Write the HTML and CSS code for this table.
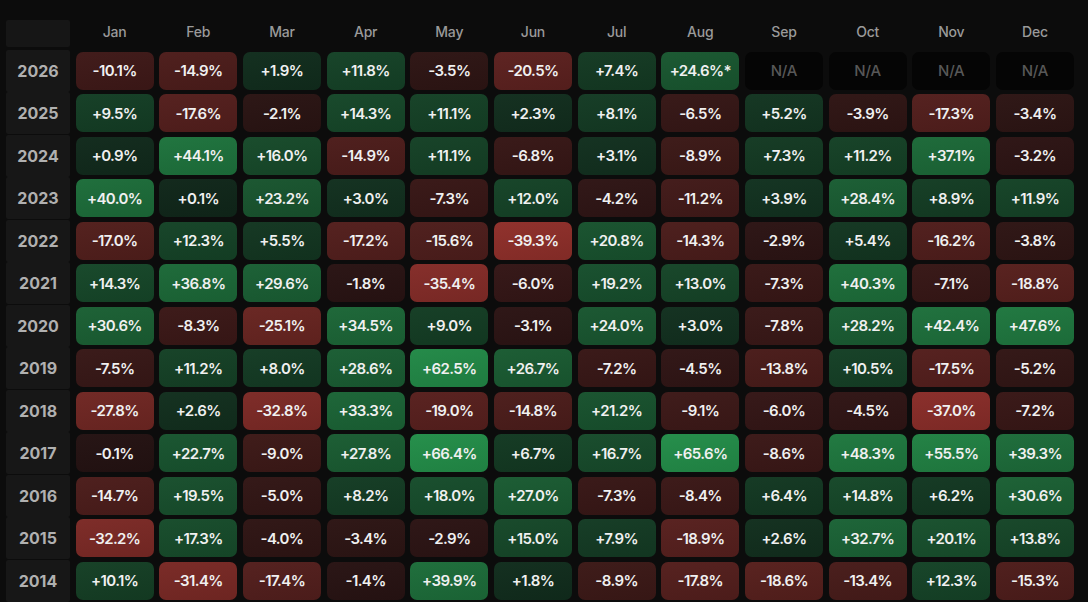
FILE: index.html
```html
<!DOCTYPE html>
<html lang="en">
<head>
<meta charset="utf-8">
<title>Monthly Returns</title>
<link rel="stylesheet" href="styles.css">
</head>
<body>
<div class="heatmap" id="heatmap">
  <div class="corner"></div>
  <div class="month">Jan</div><div class="month">Feb</div><div class="month">Mar</div>
  <div class="month">Apr</div><div class="month">May</div><div class="month">Jun</div>
  <div class="month">Jul</div><div class="month">Aug</div><div class="month">Sep</div>
  <div class="month">Oct</div><div class="month">Nov</div><div class="month">Dec</div>
</div>
<script src="script.js"></script>
</body>
</html>
```
FILE: styles.css
```css
html, body {
  margin: 0;
  padding: 0;
  background: #0c0c0c;
}
body {
  font-family: Inter, "Noto Sans", "Liberation Sans", sans-serif;
  width: 1088px;
  height: 602px;
  overflow: hidden;
}
.heatmap {
  display: grid;
  width: 1068px;
  margin: 0 0 0 6px;
  padding-top: 20px;
  grid-template-columns: 64px repeat(12, 1fr);
  grid-template-rows: 27px repeat(13, 38px);
  column-gap: 5.6px;
  row-gap: 4.5px;
}
.corner {
  background: #161616;
  border-radius: 2px;
}
.month {
  display: flex;
  align-items: flex-start;
  justify-content: center;
  padding-top: 3px;
  color: #9a9a9a;
  font-size: 14px;
  font-weight: 500;
  letter-spacing: -0.2px;
}
.year {
  display: flex;
  align-items: center;
  justify-content: center;
  background: #171717;
  color: #b0b0b0;
  font-size: 16px;
  font-weight: 700;
  border-radius: 2px;
  margin: -2px 0;
}
.cell {
  display: flex;
  align-items: center;
  justify-content: center;
  border-radius: 7px;
  color: #f0f0f0;
  font-size: 15px;
  font-weight: 600;
  letter-spacing: -0.6px;
  background-image: linear-gradient(170deg, rgba(255,255,255,0.015), rgba(0,0,0,0.1));
}
.cell.na {
  background-color: #050505;
  background-image: none;
  color: #585858;
  font-weight: 500;
  letter-spacing: -0.2px;
}
```
FILE: script.js
```js
var data = [
  [2026, ["-10.1","-14.9","+1.9","+11.8","-3.5","-20.5","+7.4","+24.6*",null,null,null,null]],
  [2025, ["+9.5","-17.6","-2.1","+14.3","+11.1","+2.3","+8.1","-6.5","+5.2","-3.9","-17.3","-3.4"]],
  [2024, ["+0.9","+44.1","+16.0","-14.9","+11.1","-6.8","+3.1","-8.9","+7.3","+11.2","+37.1","-3.2"]],
  [2023, ["+40.0","+0.1","+23.2","+3.0","-7.3","+12.0","-4.2","-11.2","+3.9","+28.4","+8.9","+11.9"]],
  [2022, ["-17.0","+12.3","+5.5","-17.2","-15.6","-39.3","+20.8","-14.3","-2.9","+5.4","-16.2","-3.8"]],
  [2021, ["+14.3","+36.8","+29.6","-1.8","-35.4","-6.0","+19.2","+13.0","-7.3","+40.3","-7.1","-18.8"]],
  [2020, ["+30.6","-8.3","-25.1","+34.5","+9.0","-3.1","+24.0","+3.0","-7.8","+28.2","+42.4","+47.6"]],
  [2019, ["-7.5","+11.2","+8.0","+28.6","+62.5","+26.7","-7.2","-4.5","-13.8","+10.5","-17.5","-5.2"]],
  [2018, ["-27.8","+2.6","-32.8","+33.3","-19.0","-14.8","+21.2","-9.1","-6.0","-4.5","-37.0","-7.2"]],
  [2017, ["-0.1","+22.7","-9.0","+27.8","+66.4","+6.7","+16.7","+65.6","-8.6","+48.3","+55.5","+39.3"]],
  [2016, ["-14.7","+19.5","-5.0","+8.2","+18.0","+27.0","-7.3","-8.4","+6.4","+14.8","+6.2","+30.6"]],
  [2015, ["-32.2","+17.3","-4.0","-3.4","-2.9","+15.0","+7.9","-18.9","+2.6","+32.7","+20.1","+13.8"]],
  [2014, ["+10.1","-31.4","-17.4","-1.4","+39.9","+1.8","-8.9","-17.8","-18.6","-13.4","+12.3","-15.3"]]
];

function mix(a, b, t) {
  return [0, 1, 2].map(function (i) { return Math.round(a[i] + (b[i] - a[i]) * t); });
}

function colorFor(v) {
  var c;
  if (v >= 0) {
    var t = Math.pow(Math.min(v / 66.4, 1), 0.75);
    c = mix([16, 38, 26], [35, 142, 73], t);
  } else {
    var r = Math.min(-v / 39.3, 1);
    c = mix([36, 18, 18], [143, 47, 42], r);
  }
  return "rgb(" + c.join(",") + ")";
}

var grid = document.getElementById("heatmap");
data.forEach(function (row) {
  var y = document.createElement("div");
  y.className = "year";
  y.textContent = row[0];
  grid.appendChild(y);
  row[1].forEach(function (s) {
    var d = document.createElement("div");
    if (s === null) {
      d.className = "cell na";
      d.textContent = "N/A";
    } else {
      d.className = "cell";
      var v = parseFloat(s);
      d.style.backgroundColor = colorFor(v);
      d.textContent = s.replace("*", "") + "%" + (s.indexOf("*") >= 0 ? "*" : "");
    }
    grid.appendChild(d);
  });
});
```
